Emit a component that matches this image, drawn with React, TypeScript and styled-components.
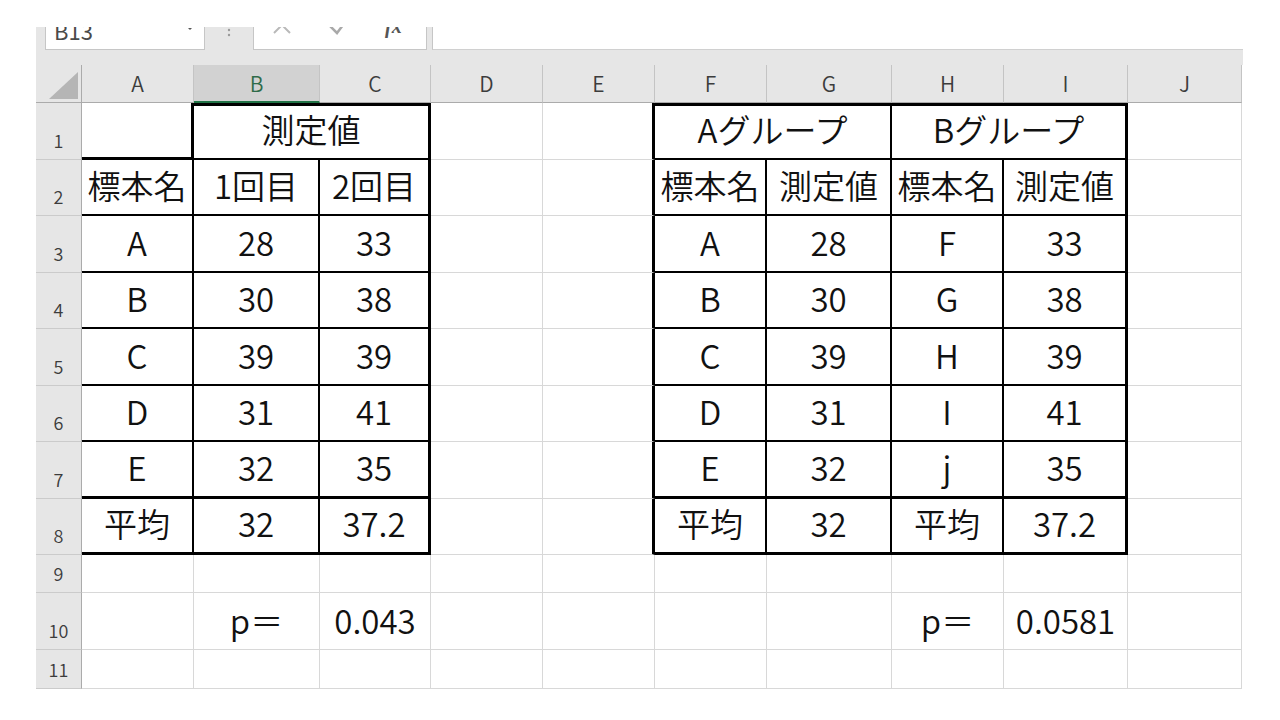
import React from "react";
import styled, { createGlobalStyle } from "styled-components";

const GlobalStyle = createGlobalStyle`
  html, body {
    margin: 0;
    padding: 0;
    background: #fff;
  }
  body {
    font-family: "Noto Sans CJK JP", "Noto Sans", sans-serif;
  }
`;

// column widths A..J and row heights 1..11, read off the sheet
const COL_WIDTHS = [112, 126, 111, 112, 112, 112, 125, 112, 124, 114];
const LETTERS = ["A", "B", "C", "D", "E", "F", "G", "H", "I", "J"];
const ROW_HEIGHTS = [56.5, 56.5, 56.5, 56.5, 56.5, 56.5, 56.5, 56.5, 38, 57, 39];
const SELECTED_COL = 1;

const Page = styled.div`
  padding: 27px 0 0 36px;
  width: 1207px;
`;

const Toolbar = styled.div`
  height: 38px;
  background: #e6e6e6;
  padding-left: 9px;
  display: flex;
  align-items: flex-start;
`;

const NameBox = styled.div`
  width: 160px;
  height: 23px;
  box-sizing: border-box;
  background: #fff;
  border: 1px solid #c6c6c6;
  border-top: 0;
  display: flex;
  align-items: flex-end;
  justify-content: space-between;
  overflow: hidden;
  padding: 0 12px 8px 8px;
  font-size: 22px;
  line-height: 1;
  color: #4a4a4a;
`;

const DropArrow = styled.span`
  align-self: flex-start;
  margin-top: 1px;
  width: 0;
  height: 0;
  border-left: 2px solid transparent;
  border-right: 2px solid transparent;
  border-top: 2px solid #555;
`;

const Grip = styled.div`
  width: 48px;
  height: 23px;
  display: flex;
  justify-content: center;
  overflow: hidden;
`;

const FuncBox = styled.div`
  width: 174px;
  height: 23px;
  box-sizing: border-box;
  background: #fff;
  border: 1px solid #c6c6c6;
  border-top: 0;
  display: flex;
  align-items: flex-end;
  overflow: hidden;
  padding: 0 0 14px 18px;
`;

const FxLabel = styled.span`
  font-family: "Liberation Serif", serif;
  font-style: italic;
  font-weight: bold;
  font-size: 20px;
  line-height: 1;
  color: #555;
  margin-left: 38px;
  margin-bottom: -1px;
`;

const FormulaInput = styled.div`
  flex: 1;
  margin-left: 5px;
  height: 23px;
  box-sizing: border-box;
  background: #fff;
  border-left: 1px solid #c6c6c6;
  border-bottom: 1px solid #d0d0d0;
`;

const Sheet = styled.div`
  display: grid;
  grid-template-columns: 46px ${COL_WIDTHS.map((w) => `${w}px`).join(" ")};
  grid-template-rows: 38px ${ROW_HEIGHTS.map((h) => `${h}px`).join(" ")};
`;

const Corner = styled.div`
  background: #e6e6e6;
  box-sizing: border-box;
  border-right: 1px solid #ababab;
  border-bottom: 1px solid #ababab;
  display: flex;
  align-items: flex-end;
  justify-content: flex-end;
  padding: 0 3px 3px 0;
`;

const ColHeader = styled.div<{ $selected?: boolean }>`
  box-sizing: border-box;
  background: ${(p) => (p.$selected ? "#d2d2d2" : "#e6e6e6")};
  border-right: 1px solid #c4c4c4;
  border-bottom: ${(p) => (p.$selected ? "2px solid #217346" : "1px solid #ababab")};
  display: flex;
  align-items: flex-end;
  justify-content: center;
  padding-bottom: ${(p) => (p.$selected ? "7px" : "8px")};
  font-size: 21px;
  font-weight: 350;
  line-height: 1;
  color: ${(p) => (p.$selected ? "#2f6b49" : "#3c3c3c")};
`;

const RowHeader = styled.div`
  box-sizing: border-box;
  background: #e6e6e6;
  border-right: 1px solid #ababab;
  border-bottom: 1px solid #cbcbcb;
  display: flex;
  align-items: flex-end;
  justify-content: center;
  padding-bottom: 10px;
  font-size: 18px;
  font-weight: 350;
  line-height: 1;
  color: #3c3c3c;
`;

const GRID = "1px solid #d8d8d8";
const line = (w: number) => (w ? `${w}px solid #000` : GRID);

const Cell = styled.div<{ $span: number; $t: number; $r: number; $b: number }>`
  grid-column: span ${(p) => p.$span};
  box-sizing: border-box;
  border-top: ${(p) => (p.$t ? `${p.$t}px solid #000` : "0")};
  border-right: ${(p) => line(p.$r)};
  border-bottom: ${(p) => line(p.$b)};
  display: flex;
  align-items: flex-end;
  justify-content: center;
  padding-bottom: 12px;
  font-size: 33px;
  font-weight: 350;
  line-height: 1;
  color: #111;
  white-space: nowrap;
`;

type Spec = { text?: string; span?: number; t?: number; r?: number; b?: number; skip?: boolean };

const IN = 2; // inner rule
const OUT = 3; // outer frame

const table1 = [
  ["標本名", "1回目", "2回目"],
  ["A", "28", "33"],
  ["B", "30", "38"],
  ["C", "39", "39"],
  ["D", "31", "41"],
  ["E", "32", "35"],
  ["平均", "32", "37.2"],
];

const table2 = [
  ["標本名", "測定値", "標本名", "測定値"],
  ["A", "28", "F", "33"],
  ["B", "30", "G", "38"],
  ["C", "39", "H", "39"],
  ["D", "31", "I", "41"],
  ["E", "32", "j", "35"],
  ["平均", "32", "平均", "37.2"],
];

function rowRule(i: number) {
  // bottom rule under body row i (0 = row 2); last two rules close the table
  return i >= table1.length - 2 ? OUT : IN;
}

function buildCells(): Spec[][] {
  const g: Spec[][] = ROW_HEIGHTS.map(() => COL_WIDTHS.map(() => ({})));

  // left table: 測定値 over B:C, body A2:C8
  g[0][0] = { r: OUT, b: OUT };
  g[0][1] = { text: "測定値", span: 2, t: OUT, r: OUT, b: IN };
  g[0][2] = { skip: true };
  table1.forEach((row, i) =>
    row.forEach((text, j) => {
      g[i + 1][j] = { text, r: j === 2 ? OUT : IN, b: rowRule(i) };
    })
  );

  // right table: two groups over F:G and H:I, body F2:I8
  for (let i = 0; i < 8; i++) g[i][4] = { r: OUT };
  g[0][5] = { text: "Aグループ", span: 2, t: OUT, r: IN, b: IN };
  g[0][6] = { skip: true };
  g[0][7] = { text: "Bグループ", span: 2, t: OUT, r: OUT, b: IN };
  g[0][8] = { skip: true };
  table2.forEach((row, i) =>
    row.forEach((text, j) => {
      g[i + 1][j + 5] = { text, r: j === 3 ? OUT : IN, b: rowRule(i) };
    })
  );

  g[9][1] = { text: "p＝" };
  g[9][2] = { text: "0.043" };
  g[9][7] = { text: "p＝" };
  g[9][8] = { text: "0.0581" };
  return g;
}

const CornerMark = () => (
  <svg width="29" height="27" viewBox="0 0 29 27">
    <polygon points="29,0 29,27 0,27" fill="#b5b5b5" />
  </svg>
);

const GripDots = () => (
  <svg width="4" height="23" viewBox="0 0 4 23">
    <circle cx="2" cy="-2" r="1.2" fill="#9a9a9a" />
    <circle cx="2" cy="3" r="1.2" fill="#9a9a9a" />
    <circle cx="2" cy="8" r="1.2" fill="#9a9a9a" />
  </svg>
);

const CancelIcon = () => (
  <svg width="20" height="18" viewBox="0 0 20 18">
    <path d="M2 0 L10 8 L18 0 M2 16 L10 8 L18 16" stroke="#b9b9b9" strokeWidth="2" fill="none" />
  </svg>
);

const EnterIcon = () => (
  <svg width="18" height="10" viewBox="0 0 18 10" style={{ marginLeft: 37 }}>
    <path d="M1 1 L8 8 L17 -4" stroke="#a9a9a9" strokeWidth="2.5" fill="none" />
  </svg>
);

export default function App() {
  const cells = buildCells();
  return (
    <Page>
      <GlobalStyle />
      <Toolbar>
        <NameBox>
          <span>B13</span>
          <DropArrow />
        </NameBox>
        <Grip>
          <GripDots />
        </Grip>
        <FuncBox>
          <CancelIcon />
          <EnterIcon />
          <FxLabel>fx</FxLabel>
        </FuncBox>
        <FormulaInput />
      </Toolbar>
      <Sheet>
        <Corner>
          <CornerMark />
        </Corner>
        {LETTERS.map((l, i) => (
          <ColHeader key={l} $selected={i === SELECTED_COL}>
            {l}
          </ColHeader>
        ))}
        {cells.map((row, ri) => (
          <React.Fragment key={ri}>
            <RowHeader>{ri + 1}</RowHeader>
            {row.map((c, ci) =>
              c.skip ? null : (
                <Cell key={ci} $span={c.span ?? 1} $t={c.t ?? 0} $r={c.r ?? 0} $b={c.b ?? 0}>
                  {c.text}
                </Cell>
              )
            )}
          </React.Fragment>
        ))}
      </Sheet>
    </Page>
  );
}
